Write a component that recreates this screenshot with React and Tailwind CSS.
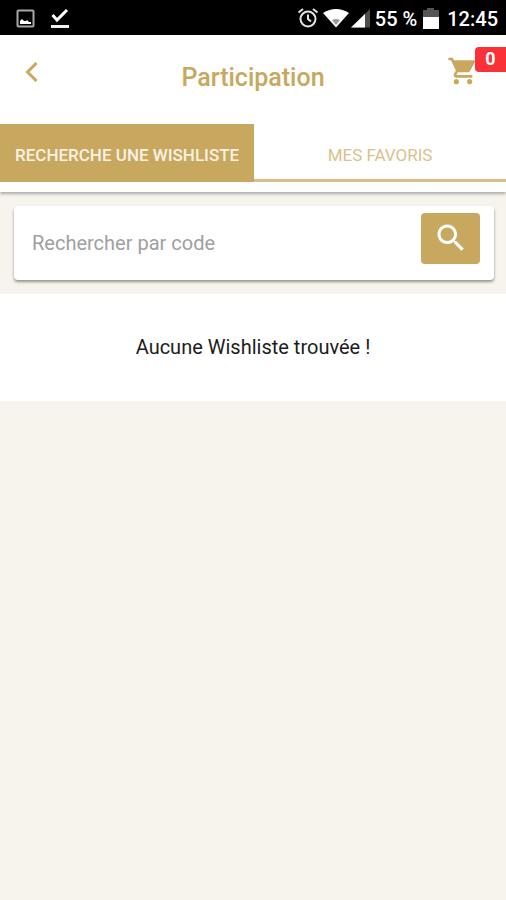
import React from "react";

function StatusBar() {
  return (
    <div className="flex h-[35px] items-center justify-between bg-black pt-0.5 pl-4 pr-2 text-white">
      <div className="flex items-center gap-3.5">
        <svg className="h-5 w-5" viewBox="0 0 20 20" aria-hidden="true">
          <rect x="1.5" y="1.5" width="16" height="16" rx="1" fill="none" stroke="#a8a8a8" strokeWidth="2" />
          <path d="M4 15v-3l2-2 2 2h2l1-1 2 2h2v2z" fill="#fff" />
        </svg>
        <svg className="h-5 w-5" viewBox="0 0 20 20" aria-hidden="true">
          <path d="M2.500 6l4.500 5L17 1" fill="none" stroke="#fff" strokeWidth="3" />
          <path d="M1 17.500h18" stroke="#f0f0f0" strokeWidth="3" />
        </svg>
      </div>
      <div className="flex items-center">
        <svg className="h-[22px] w-[22px]" viewBox="0 0 22 22" fill="none" stroke="#e4e4e4" strokeWidth="2" aria-hidden="true">
          <circle cx="11" cy="11" r="7.500" />
          <path d="M11 6.500V11l3 2.500M1.500 4.500L6 1M20.500 4.500L16 1" />
        </svg>
        <svg className="ml-1 h-5 w-[26px]" viewBox="0 0 26 20" aria-hidden="true">
          <path d="M0 4Q13-4 26 4L13 18.500z" fill="#fff" />
          <path d="M9 11q4-2 8 0L13 16z" fill="#999" />
        </svg>
        <svg className="ml-0.5 h-5 w-5" viewBox="0 0 20 20" aria-hidden="true">
          <path d="M0 18.500L19 0v18.500z" fill="#4d4d4d" />
          <path d="M0 18.500L14 5v13.500z" fill="#fff" />
        </svg>
        <span className="ml-1 text-xl font-medium">55 %</span>
        <svg className="ml-1.5 h-[22px] w-4" viewBox="0 0 16 22" aria-hidden="true">
          <path d="M0 2h4V0h7v2h5v8H0z" fill="#555" />
          <path d="M0 9h16v12H0z" fill="#fff" />
        </svg>
        <span className="ml-2 text-xl font-medium">12:45</span>
      </div>
    </div>
  );
}

function Header() {
  return (
    <header className="relative bg-white pb-2.5 shadow-[0_2px_3px_rgba(0,0,0,0.3)]">
      <div className="grid h-[89px] grid-cols-[1fr_auto_1fr] items-start">
        <button type="button" aria-label="Retour" className="mt-[25px] ml-5 flex h-6 w-6 items-center justify-center text-[#c8a75e]">
          <svg className="h-6 w-6" viewBox="0 0 24 24" fill="none" stroke="currentColor" strokeWidth="3" aria-hidden="true">
            <path d="M16.500 3L7.500 12l9 9" />
          </svg>
        </button>
        <h1 className="mt-[26px] text-[25px] leading-[34px] font-medium text-[#c8a75e]">Participation</h1>
        <button type="button" aria-label="Panier, 0 article" className="mt-3 flex items-start justify-self-end text-[#c8a75e]">
          <svg className="mt-2 h-8 w-8" viewBox="0 0 24 24" fill="currentColor" aria-hidden="true">
            <path d="M7 18c-1.100 0-1.990.9-1.990 2S5.900 22 7 22s2-.9 2-2-.9-2-2-2zM1 2v2h2l3.600 7.590-1.350 2.450c-.16.280-.25.610-.25.960 0 1.100.9 2 2 2h12v-2H7.420c-.14 0-.25-.11-.25-.25l.03-.12.900-1.630h7.450c.75 0 1.410-.41 1.750-1.030l3.580-6.490A1.003 1.003 0 0020 4H5.210l-.94-2H1zm16 16c-1.100 0-1.990.9-1.990 2s.89 2 1.990 2 2-.9 2-2-.9-2-2-2z" />
          </svg>
          <span className="-ml-1 h-[25px] w-[31px] rounded-l bg-[#fa3237] text-center text-lg leading-6 font-bold text-white">0</span>
        </button>
      </div>
      <nav role="tablist" className="flex">
        <button type="button" role="tab" aria-selected="true" className="h-[58px] shrink-0 bg-[#c8a75e] px-[15px] pt-1.5 text-[17px] font-medium whitespace-nowrap text-[#fbf1e4]">
          RECHERCHE UNE WISHLISTE
        </button>
        <button type="button" role="tab" aria-selected="false" className="h-[58px] flex-1 border-b-3 border-[#d8be88] pt-2 text-[17px] whitespace-nowrap text-[#d9c18d]">
          MES FAVORIS
        </button>
      </nav>
    </header>
  );
}

function SearchCard() {
  return (
    <form className="my-3.5 mr-3 ml-3.5 flex h-[74px] items-start rounded bg-white pt-[7px] pr-3.5 pl-[18px] shadow-[0_2px_3px_rgba(0,0,0,0.4)]" onSubmit={(event) => event.preventDefault()}>
      <input type="text" aria-label="Rechercher par code" placeholder="Rechercher par code" className="mt-1 h-[52px] min-w-0 flex-1 text-xl text-[#333333] outline-none placeholder:text-[#a0a0a0]" />
      <button type="submit" aria-label="Rechercher" className="flex h-[51px] w-[59px] items-center justify-center rounded bg-[#c8a75e] pb-0.5 text-white">
        <svg className="h-9 w-9" viewBox="0 0 24 24" fill="currentColor" aria-hidden="true">
          <path d="M15.500 14h-.79l-.28-.27C15.410 12.590 16 11.110 16 9.500 16 5.910 13.090 3 9.500 3S3 5.910 3 9.500 5.910 16 9.500 16c1.610 0 3.090-.59 4.230-1.570l.27.28v.79l5 4.990L20.490 19l-4.990-5zm-6 0C7.010 14 5 11.990 5 9.500S7.010 5 9.500 5 14 7.010 14 9.500 11.990 14 9.500 14z" />
        </svg>
      </button>
    </form>
  );
}

export default function App() {
  return (
    <div className="flex min-h-screen flex-col bg-[#f7f4ed] font-[Roboto,sans-serif]">
      <StatusBar />
      <Header />
      <main>
        <SearchCard />
        <p className="bg-white px-4 py-10 text-center text-xl leading-[27px] text-[#1c1c1c]">Aucune Wishliste trouvée !</p>
      </main>
    </div>
  );
}
